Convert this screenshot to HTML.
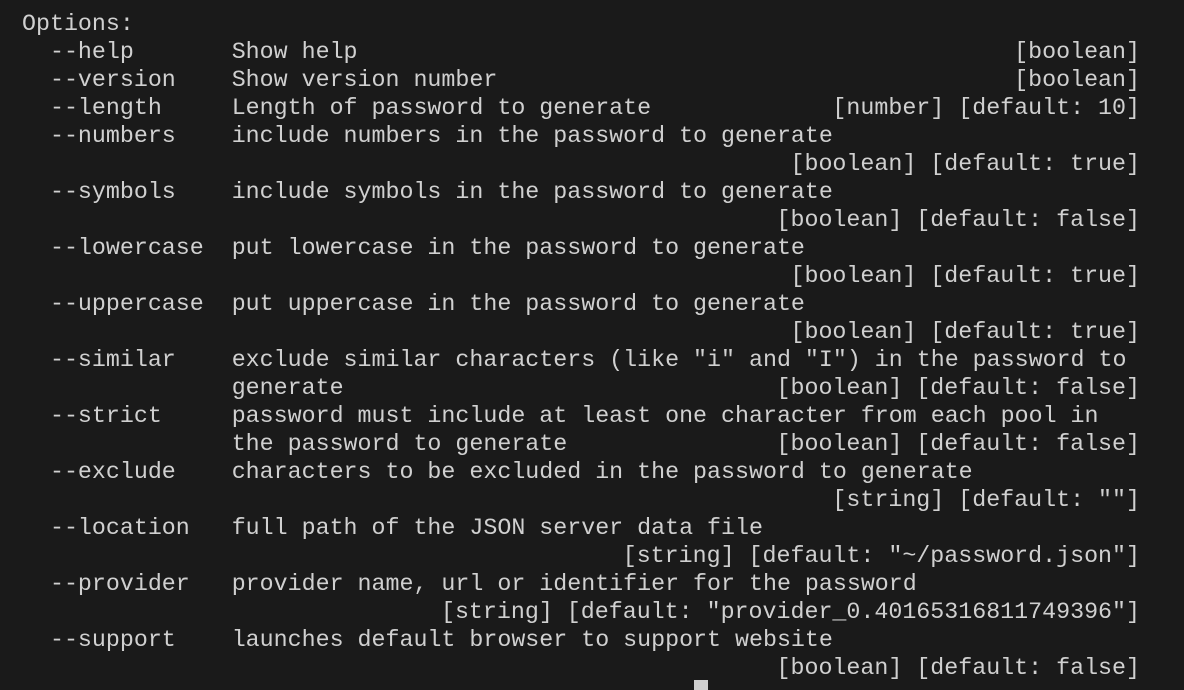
<!DOCTYPE html>
<html><head><style>
html,body{margin:0;padding:0;background:#1a1a1a;width:1184px;height:686px;overflow:hidden}
.t{position:absolute;left:22px;top:10px;width:1118px;font-family:"Liberation Mono",monospace;font-size:23.3px;color:#d0d0d0}
.l{height:28px;line-height:28px;white-space:pre;position:relative}
.r{position:absolute;right:0;top:0}
.cur{position:absolute;left:694px;top:680px;width:14px;height:10px;background:#cfcfcf}
</style></head><body>
<div class="t">
<div class="l">Options:</div>
<div class="l">  --help       Show help<span class="r">[boolean]</span></div>
<div class="l">  --version    Show version number<span class="r">[boolean]</span></div>
<div class="l">  --length     Length of password to generate<span class="r">[number] [default: 10]</span></div>
<div class="l">  --numbers    include numbers in the password to generate</div>
<div class="l"><span class="r">[boolean] [default: true]</span></div>
<div class="l">  --symbols    include symbols in the password to generate</div>
<div class="l"><span class="r">[boolean] [default: false]</span></div>
<div class="l">  --lowercase  put lowercase in the password to generate</div>
<div class="l"><span class="r">[boolean] [default: true]</span></div>
<div class="l">  --uppercase  put uppercase in the password to generate</div>
<div class="l"><span class="r">[boolean] [default: true]</span></div>
<div class="l">  --similar    exclude similar characters (like "i" and "I") in the password to</div>
<div class="l">               generate<span class="r">[boolean] [default: false]</span></div>
<div class="l">  --strict     password must include at least one character from each pool in</div>
<div class="l">               the password to generate<span class="r">[boolean] [default: false]</span></div>
<div class="l">  --exclude    characters to be excluded in the password to generate</div>
<div class="l"><span class="r">[string] [default: ""]</span></div>
<div class="l">  --location   full path of the JSON server data file</div>
<div class="l"><span class="r">[string] [default: "~/password.json"]</span></div>
<div class="l">  --provider   provider name, url or identifier for the password</div>
<div class="l"><span class="r">[string] [default: "provider_0.40165316811749396"]</span></div>
<div class="l">  --support    launches default browser to support website</div>
<div class="l"><span class="r">[boolean] [default: false]</span></div>
</div>
<div class="cur"></div>
</body></html>
